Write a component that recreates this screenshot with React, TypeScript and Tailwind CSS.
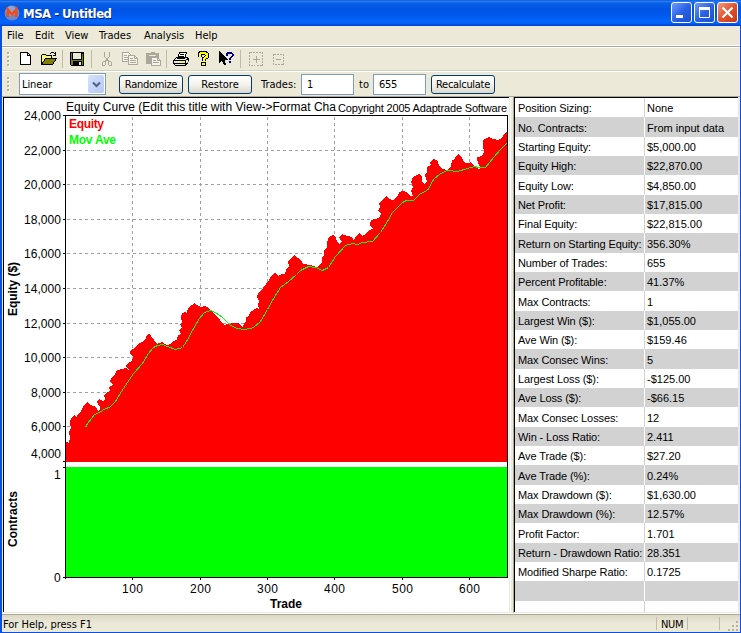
import React from 'react'

const UI = "font-['DejaVu_Sans_Condensed','DejaVu_Sans',sans-serif] text-[11px]"

const stats = [
  ['Position Sizing:', 'None'],
  ['No. Contracts:', 'From input data'],
  ['Starting Equity:', '$5,000.00'],
  ['Equity High:', '$22,870.00'],
  ['Equity Low:', '$4,850.00'],
  ['Net Profit:', '$17,815.00'],
  ['Final Equity:', '$22,815.00'],
  ['Return on Starting Equity:', '356.30%'],
  ['Number of Trades:', '655'],
  ['Percent Profitable:', '41.37%'],
  ['Max Contracts:', '1'],
  ['Largest Win ($):', '$1,055.00'],
  ['Ave Win ($):', '$159.46'],
  ['Max Consec Wins:', '5'],
  ['Largest Loss ($):', '-$125.00'],
  ['Ave Loss ($):', '-$66.15'],
  ['Max Consec Losses:', '12'],
  ['Win - Loss Ratio:', '2.411'],
  ['Ave Trade ($):', '$27.20'],
  ['Ave Trade (%):', '0.24%'],
  ['Max Drawdown ($):', '$1,630.00'],
  ['Max Drawdown (%):', '12.57%'],
  ['Profit Factor:', '1.701'],
  ['Return - Drawdown Ratio:', '28.351'],
  ['Modified Sharpe Ratio:', '0.1725'],
  ['', ''],
  ['', ''],
]

const yTicks: [number, string, number][] = [
  [115, '24,000', 37], [150, '22,000', 37], [184, '20,000', 37], [219, '18,000', 37], [253, '16,000', 37],
  [288, '14,000', 37], [323, '12,000', 37], [357, '10,000', 37], [392, '8,000', 30], [426, '6,000', 30],
]
const xTicks: [number, string][] = [[132, '100'], [200, '200'], [267, '300'], [334, '400'], [402, '500'], [469, '600']]

const equity =
  '66,442 69,443 70,437 69,432 71,428 70,423 71,418 74,415 77,417 78,414 81,411 83,407 85,404 87,402 90,405 94,406 97,408 98,411 100,410 100,407 97,402 99,399 103,401 105,399 104,395 107,392 110,391 109,387 113,385 110,382 111,378 115,374 117,370 122,369 126,368 129,370 126,366 129,362 132,361 133,357 130,353 131,350 135,348 137,345 142,342 145,340 147,335 149,333 151,336 154,340 157,344 162,342 167,345 171,344 173,341 177,340 178,335 181,334 179,330 182,328 180,324 182,322 181,317 182,313 185,312 187,313 188,308 192,305 194,303 197,305 201,307 204,306 207,307 210,310 215,315 220,320 224,325 228,324 233,323 238,323 243,328 244,323 246,321 246,317 249,316 250,312 257,308 259,309 258,305 259,301 257,297 258,293 261,291 263,288 266,284 269,280 272,275 275,272 278,276 282,274 285,274 286,270 289,266 288,262 291,258 294,255 298,258 302,261 303,264 310,265 317,267 322,263 322,257 324,255 324,250 327,247 327,242 329,237 333,235 336,238 337,242 339,244 342,242 339,237 342,234 347,236 352,237 354,241 355,237 359,233 362,236 366,234 369,230 373,229 370,225 371,220 375,219 379,218 381,214 378,211 380,207 379,203 383,200 386,196 389,199 393,200 398,196 399,192 403,191 407,192 410,196 413,196 411,191 413,187 411,182 413,177 419,174 422,177 422,182 425,184 427,181 425,175 427,172 427,167 431,165 430,162 433,159 437,160 439,165 442,169 447,170 451,166 452,160 454,160 456,156 459,154 462,158 465,163 468,163 471,162 474,166 478,167 479,171 480,167 477,160 477,157 482,156 484,152 483,146 483,140 489,137 493,139 498,140 502,138 505,133 507,132'

const movAve =
  '85,427 87,423 91,418 94,414 99,412 105,408 109,407 115,401 121,391 125,385 133,373 142,363 148,353 153,347 157,345 162,344 167,346 175,349 182,347 186,341 193,328 199,318 204,312 210,310 215,312 222,317 230,325 237,328 243,329 250,328 253,327 260,321 267,309 273,298 280,287 288,281 296,274 300,270 308,266 315,267 322,270 328,267 335,256 345,245 352,243 357,244 362,242 372,241 380,232 387,221 392,212 402,202 406,200 413,200 420,193 427,190 433,179 440,173 447,170 457,171 467,168 474,166 478,167 485,167 493,157 500,149 506,143'

function Chart() {
  return (
    <svg width="505" height="514" viewBox="4 98 505 514" className="block bg-white font-['Liberation_Sans',sans-serif] text-[12px]">
      <g shapeRendering="crispEdges">
        <g stroke="#a0a0a0" strokeDasharray="3 3">
          {yTicks.slice(1).map(([y]) => <path key={y} d={`M67 ${y + 0.5}H507`} />)}
          {xTicks.map(([x]) => <path key={x} d={`M${x + 0.5} 117V464`} />)}
        </g>
        <polygon points={`66,462 ${equity} 507,462`} fill="#f00" />
        <polyline points={movAve} fill="none" stroke="#0f0" transform="translate(.5 .5)" />
        <rect x="66" y="467" width="441" height="110" fill="#0f0" />
        <g stroke="#000" fill="none">
          <path d="M63 115.5H507.5V577.5H63M65.5 115V579M63 461.5H66M63 467.5H66" />
          {yTicks.map(([y]) => <path key={y} d={`M63 ${y + 0.5}H66`} />)}
          {xTicks.map(([x]) => <path key={x} d={`M${x + 0.5} 577V580`} />)}
        </g>
      </g>
      {yTicks.map(([y, label, w]) => <text key={y} x={61 - w} y={y + 5} textLength={w}>{label}</text>)}
      <text x="31" y="458" textLength="30">4,000</text>
      <text x="54" y="479">1</text>
      <text x="54" y="582">0</text>
      {xTicks.map(([x, label]) => <text key={x} x={x - 10} y="593" textLength="21">{label}</text>)}
      <text x="66" y="111" textLength="270">Equity Curve (Edit this title with View-&gt;Format Cha</text>
      <text x="338" y="112" textLength="169" className="text-[11px]">Copyright 2005 Adaptrade Software</text>
      <g className="font-bold">
        <text x="69" y="128" fill="#f00" textLength="35">Equity</text>
        <text x="69" y="144" fill="#0f0" textLength="47">Mov Ave</text>
        <text x="270" y="608" textLength="32">Trade</text>
        <text transform="translate(17 316) rotate(-90)" textLength="54">Equity ($)</text>
        <text transform="translate(17 547) rotate(-90)" textLength="56">Contracts</text>
      </g>
    </svg>
  )
}

function Grip() {
  return (
    <svg width="4" height="16" className="shrink-0" shapeRendering="crispEdges">
      {[1, 5, 9, 13].map((y) => (
        <g key={y}>
          <rect x="1" y={y + 1} width="2" height="2" fill="#fff" />
          <rect x="0" y={y} width="2" height="2" fill="#b5b1a3" />
        </g>
      ))}
    </svg>
  )
}

// every toolbar glyph sits on a 16px pixel grid
function Icon({ children, className = '' }: { children: React.ReactNode; className?: string }) {
  return <svg width="16" height="16" viewBox="0 0 16 16" className={`shrink-0 ${className}`} shapeRendering="crispEdges" fill="none">{children}</svg>
}

const Sep = ({ className = '' }: { className?: string }) => <div className={`h-[18px] w-px shrink-0 bg-[#c0bcab] ${className}`} />

function IconBar() {
  return (
    <div className="flex h-[22px] shrink-0 items-center pb-px pl-[5px]">
      <Grip />
      <Icon className="ml-[7px]">
        <path d="M2.5 1.5H9.5L12.5 4.5V13.5H2.5Z" fill="#fff" stroke="#000" />
        <path d="M9.5 1.5V4.5H12.5" stroke="#000" />
      </Icon>
      <Icon className="ml-[7px]">
        <path d="M.5 13.5V4.5L1.5 3.5H4.5L5.5 4.5H10.5V7.5H5L.5 13.5" fill="#ff0" stroke="#000" />
        <path d="M1 5h1v1h-1zM3 5h1v1h-1zM5 5h1v1h-1zM7 5h1v1h-1zM9 5h1v1h-1zM2 6h1v1h-1zM4 6h1v1h-1zM6 6h1v1h-1zM8 6h1v1h-1zM1 7h1v1h-1zM3 7h1v1h-1zM2 8h1v1h-1zM1 9h1v1h-1z" fill="#fff" />
        <path d="M.5 13.5L4.5 7.5H15.5L11.5 13.5Z" fill="#808000" stroke="#000" />
        <path d="M9 2.5H10M10 1.5H13M13 2.5H14M14 1V5M12 4.5H15" stroke="#000" />
      </Icon>
      <Sep className="ml-[5px]" />
      <Icon className="ml-[6px]">
        <path d="M1.5 1.5H14.5V14.5H2.5L1.5 13.5Z" fill="#808000" stroke="#000" />
        <rect x="4" y="2" width="8" height="6" fill="#ece9d8" />
        <path d="M3.5 2V8.5H12.5V2M13 2.5H14" stroke="#000" />
        <rect x="4" y="10" width="9" height="5" fill="#000" />
        <rect x="10" y="11" width="2" height="3" fill="#ece9d8" />
      </Icon>
      <Sep className="ml-[6px]" />
      <Icon className="ml-[7px]">
        <path d="M5.5 1V5L7.5 8L10.5 11M10.5 1V5L8.5 8L5.5 11" stroke="#aca899" />
        <path d="M4.5 10.5H6.5V13.5L5.5 14.5H3.5V11.5ZM9.5 10.5H11.5L12.5 11.5V14.5H10.5L9.5 13.5Z" stroke="#aca899" />
      </Icon>
      <Icon className="ml-[7px]">
        <path d="M.5 1.5H6.5L8.5 3.5V10.5H.5Z" fill="#f5f3ea" stroke="#aca899" />
        <path d="M2 4.5H5M2 6.5H7M2 8.5H6" stroke="#aca899" />
        <path d="M6.5 4.5H12.5L15.5 7.5V13.5H6.5Z" fill="#f5f3ea" stroke="#aca899" />
        <path d="M12.5 5V7.5H15M8 7.5H11M8 9.5H14M8 11.5H14" stroke="#aca899" />
      </Icon>
      <Icon className="ml-[7px]">
        <path d="M1 2H5L6 1H9L10 2H14V13H1Z" fill="#aca899" />
        <path d="M4 4.5H11" stroke="#ece9d8" />
        <path d="M6.5 6.5H12.5L15.5 9.5V14.5H6.5Z" fill="#f5f3ea" stroke="#aca899" />
        <path d="M12.5 7V9.5H15M8 9.5H11M8 11.5H14" stroke="#aca899" />
      </Icon>
      <Sep className="ml-[5px]" />
      <Icon className="ml-[6px]">
        <path d="M4.5 7.5L6.5 1.5H13.5L11.5 7.5Z" fill="#fff" stroke="#000" />
        <path d="M7 3.5H11M6 5.5H11" stroke="#000" />
        <path d="M.5 9.5L3.5 6.5H14.5L15.5 7.5V10.5L12.5 14.5H2.5L.5 12.5Z" fill="#ece9d8" stroke="#000" />
        <path d="M1 9.5H12.5V14M12.5 9.5L15 7.5M1 12.5H12M4 7.5H12" stroke="#000" />
        <path d="M8 11H11" stroke="#ff0" strokeWidth="2" />
        <path d="M13.5 12.5L15.5 10.5" stroke="#808080" />
      </Icon>
      <Icon className="ml-[6px]">
        <path d="M4.5 5.5V3L6 1.7H10L11.5 3V6L8.5 8V10" stroke="#000" strokeWidth="4" />
        <rect x="6" y="11" width="5" height="4" fill="#000" />
        <path d="M4.5 5.5V3L6 1.9H10L11.5 3V6L8.5 8V10" stroke="#ff0" strokeWidth="2" />
        <rect x="7" y="12" width="3" height="2" fill="#ff0" />
      </Icon>
      <Icon className="ml-[7px]">
        <path d="M1 0V12L4 9.5L6 14H8L6.5 9H10Z" fill="#000" />
        <path d="M8.8 5V3L10 1.5H13L14.5 3V5L12 7.5V9" stroke="#000080" strokeWidth="2" />
        <rect x="11" y="10" width="2" height="2" fill="#000080" />
      </Icon>
      <Sep className="ml-[6px]" />
      <Icon className="ml-[7px]">
        <rect x="1.5" y="1.5" width="13" height="13" stroke="#aca899" strokeDasharray="2 1" />
        <path d="M8.5 5V12M5 8.5H12" stroke="#aca899" />
      </Icon>
      <Icon className="ml-[7px]">
        <rect x="2.5" y="3.5" width="10" height="10" stroke="#aca899" strokeDasharray="2 1" />
        <path d="M5 8.5H10" stroke="#aca899" />
      </Icon>
    </div>
  )
}

const XpButton = ({ label, className }: { label: string; className: string }) => (
  <button className={`flex h-[19px] shrink-0 items-center justify-center rounded-[3px] border border-[#003c74] bg-linear-to-b from-white via-[#f4f3ee] to-[#dcd7cb] whitespace-nowrap ${className}`}>
    {label}
  </button>
)

const Field = ({ value, className }: { value: string; className: string }) => (
  <div className={`flex h-[21px] w-[53px] shrink-0 items-center border border-[#7f9db9] bg-white pl-[5px] ${className}`}>{value}</div>
)

function ControlBar() {
  return (
    <div className="flex h-6 shrink-0 items-center pl-[5px]">
      <Grip />
      <div className="ml-2 flex h-[22px] w-[87px] shrink-0 items-center justify-between border border-[#7f9db9] bg-white pr-px pl-[2px]">
        <span className="pt-px tracking-[-0.1px]">Linear</span>
        <span className="flex h-[18px] w-4 items-center justify-center rounded-[2px] bg-linear-to-br from-[#d5e1fd] to-[#b5c8f6]">
          <svg width="9" height="7" fill="none"><path d="M1 1.5L4.5 5L8 1.5" stroke="#4d6185" strokeWidth="2" /></svg>
        </span>
      </div>
      <XpButton label="Randomize" className="ml-[13px] w-16 tracking-[-0.3px]" />
      <XpButton label="Restore" className="ml-[5px] w-16" />
      <span className="ml-[9px] w-10">Trades:</span>
      <Field value="1" className="" />
      <span className="ml-[5px] w-[14px]">to</span>
      <Field value="655" className="tracking-[-0.3px]" />
      <XpButton label="Recalculate" className="ml-[5px] w-16 tracking-[-0.3px]" />
    </div>
  )
}

function TitleBar() {
  const box = 'size-[21px] rounded-[3px] border border-white'
  return (
    <div className="flex h-[26px] shrink-0 items-start justify-between bg-[linear-gradient(#0a58dc_0%,#2b7bf2_5%,#0860e8_12%,#0054e3_35%,#0058ee_60%,#0266fd_80%,#0260f5_90%,#003dd0_100%)] pr-[3px] pl-1">
      <div className="flex h-[26px] items-center">
        <svg width="16" height="16" viewBox="0 0 16 16">
          <circle cx="8" cy="8" r="7.5" fill="#6f88c4" />
          <circle cx="7" cy="6" r="5" fill="#a3aed4" opacity=".7" />
          <path d="M3.8 12V4.5L8 9.5L12.2 4.5V12" fill="none" stroke="#f04a1c" strokeWidth="2.6" />
        </svg>
        <span className="ml-[3px] pt-px font-['DejaVu_Sans_Condensed','DejaVu_Sans',sans-serif] text-[13px] font-bold tracking-[-0.5px] text-white [text-shadow:1px_1px_#0a2a80]">MSA - Untitled</span>
      </div>
      <div className="flex gap-[2px] pt-[2px]">
        <svg className={`${box} bg-linear-to-br from-[#6f9bf7] via-[#2a62e6] to-[#1c50cf]`} viewBox="0 0 19 19"><rect x="4" y="12" width="7" height="3" fill="#fff" /></svg>
        <svg className={`${box} bg-linear-to-br from-[#6f9bf7] via-[#2a62e6] to-[#1c50cf]`} viewBox="0 0 19 19">
          <path d="M4.5 5V14.5H14.5V5" fill="none" stroke="#fff" /><rect x="4" y="4" width="11" height="3" fill="#fff" />
        </svg>
        <svg className={`${box} bg-linear-to-br from-[#f09a7c] via-[#e1512b] to-[#c8390f]`} viewBox="0 0 19 19"><path d="M4.5 4.5L14.5 14.5M14.5 4.5L4.5 14.5" stroke="#fff" strokeWidth="2.2" /></svg>
      </div>
    </div>
  )
}

export default function App() {
  return (
    <div className={`flex h-[633px] w-[741px] flex-col overflow-hidden bg-[#ece9d8] leading-none text-black ${UI}`}>
      <TitleBar />
      <div className="flex min-h-0 flex-1 flex-col border-r border-b border-l-2 border-[#0a50e0]">
        <div className="flex h-[19px] shrink-0 items-center pl-[5px]">
          <span className="w-7">File</span>
          <span className="w-[30px]">Edit</span>
          <span className="w-[34px]">View</span>
          <span className="w-[45px]">Trades</span>
          <span className="w-[51px] tracking-[-0.1px]">Analysis</span>
          <span>Help</span>
        </div>
        <div className="h-[3px] shrink-0 border-t border-b border-white bg-[#aca899]" />
        <IconBar />
        <div className="h-[2px] shrink-0 border-t border-b border-t-[#d8d2bd] border-b-white" />
        <ControlBar />
        <div className="h-px shrink-0 bg-[#aca899]" />
        <div className="flex h-[516px] shrink-0 pl-px">
          <div className="box-content h-[514px] w-[505px] border-t border-l border-black"><Chart /></div>
          <div className="ml-px w-[3px] border-l border-white" />
          <div className="w-px bg-[#aca899]" />
          <div className="flex h-[515px] w-[224px] flex-col overflow-hidden border-t border-l border-black bg-white font-['Liberation_Sans',sans-serif]">
            {stats.map(([name, value], i) => (
              <div key={i} className={`flex shrink-0 items-center ${i % 3 === 1 ? 'h-5' : 'h-[19px]'} ${i % 2 ? 'bg-[#d2d2d2]' : 'bg-white'}`}>
                <span className="w-[129px] pt-[2px] pl-[3px] tracking-[-0.1px] whitespace-nowrap">{name}</span>
                <span className={`h-full w-px ${i % 2 ? 'bg-white' : 'bg-[#d2d2d2]'}`} />
                <span className="pt-[2px] pl-[2px]">{value}</span>
              </div>
            ))}
          </div>
        </div>
        <div className="h-[2px] shrink-0 border-t border-b border-t-white border-b-[#aca899]" />
        <div className="flex min-h-0 flex-1 items-center bg-linear-to-b from-[#dcd8c6] via-[#ece9d8] to-[#ece9d8] pl-px">
          <span className="flex-1 pt-px">For Help, press F1</span>
          <span className="flex h-[13px] w-[31px] items-center border-l border-[#c0bcab] pt-px pl-1 tracking-[-0.3px]">NUM</span>
          <span className="h-[13px] w-[33px] border-x border-[#c0bcab]" />
          <span className="flex h-full w-5 items-end justify-end">
            <svg width="12" height="12" className="relative top-px" fill="#b8b4a2" shapeRendering="crispEdges">
              <path d="M8 0h2v2h-2zM4 4h2v2h-2zM8 4h2v2h-2zM0 8h2v2h-2zM4 8h2v2h-2zM8 8h2v2h-2z" />
            </svg>
          </span>
        </div>
      </div>
    </div>
  )
}
